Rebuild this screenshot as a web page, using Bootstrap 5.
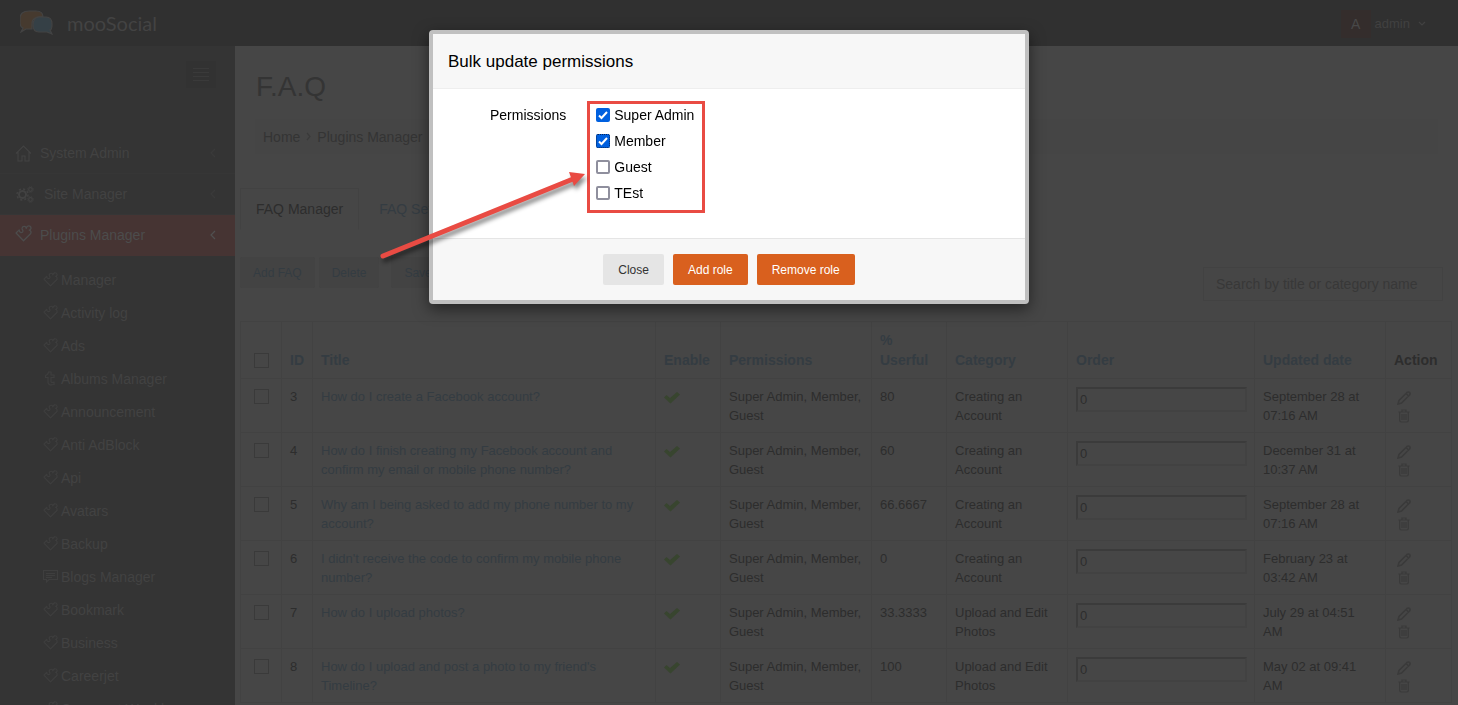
<!DOCTYPE html>
<html lang="en">
<head>
<meta charset="utf-8">
<meta name="viewport" content="width=device-width, initial-scale=1">
<title>F.A.Q - mooSocial</title>
<link href="https://cdn.jsdelivr.net/npm/bootstrap@5.3.0/dist/css/bootstrap.min.css" rel="stylesheet">
<style>
  body { font-family: "Liberation Sans", Arial, sans-serif; font-size: 14px; line-height: 20px; background: #464646; color: #2d2d2d; overflow: hidden; height: 100vh; }
  a { text-decoration: none; color: inherit; }
  svg { fill: none; stroke: currentColor; stroke-width: 1.2; flex: none; }

  .topbar { background: #303030; height: 46px; padding: 2px 32px 0 20px; color: #434343; }
  .brand-text { font-family: Lato, sans-serif; font-size: 20px; line-height: 24px; margin: 0 0 3px 14px; color: #434343; }
  .brand-logo { margin-bottom: 3px; }
  .avatar { width: 30px; height: 28px; background: #342d2c; color: #484848; line-height: 28px; text-align: center; }
  .user-btn { background: none; border: 0; padding: 0; color: #414141; font-size: 13px; }

  .sidebar { width: 235px; background: #343434; color: #424242; flex: none; }
  .toggler { width: 30px; height: 27px; background: #323232; border: 0; color: #3a3a3a; margin: 15px 19px 45px auto; padding: 0; }
  .main-link { height: 41px; padding: 0 19px 0 15px; border-bottom: 1px solid #363636; }
  .main-link .chev { color: #3a3a3a; }
  .main-link.current { background: #463433; color: #4c4c4c; border-color: #463433; }
  .main-link.current .chev { color: #505050; }
  .sub-menu { padding: 7px 0 0 43px; }
  .sub-link { height: 33px; gap: 3px; }
  .sub-link svg { color: #3e3e3e; }
  .cog-gap { gap: 10px; }

  .content { padding: 0 6px 0 5px; }
  h1 { font-size: 28px; line-height: 34px; margin: 24px 16px 15px; font-weight: 400; color: #343434; }
  .crumbs { background: #454545; margin: 0 14px 34px 15px; height: 35px; padding: 0 8px; color: #343434; gap: 6px; }
  .crumbs svg { color: #3a3a3a; }
  .tab-item { height: 42px; padding: 0 15px; border: 1px solid transparent; }
  .tab-item.current { border-color: #424242; border-bottom-color: transparent; }
  .toolbar { margin-top: 27px; }
  .tool-btn { background: #434343; border: 0; border-radius: 2px; height: 31px; padding: 0 13px; font-size: 12px; }
  .blueish { color: #343c42; }
  .search { width: 240px; height: 34px; background: transparent; border: 1px solid #424242; padding: 0 12px; margin: 10px 9px 20px 0; }
  .search::placeholder { color: #383838; opacity: 1; }

  .faq { table-layout: fixed; width: 100%; border-collapse: collapse; font-size: 13px; line-height: 19px; }
  .faq th, .faq td { border: 1px solid #424242; padding: 8px 7px 7px 8px; vertical-align: top; }
  .faq th { font-size: 14px; vertical-align: bottom; height: 57px; line-height: 20px; padding-bottom: 8px; }
  .faq a { color: #343c42; }
  .faq .pick { padding-left: 13px; }
  .faq .when { padding-right: 12px; }
  .pick input { appearance: none; width: 15px; height: 15px; border: 1px solid #3a3a3a; display: block; margin: 2px 0; }
  .order-box { width: 100%; height: 25px; border: 2px solid; border-color: #3b3b3b #424242 #424242 #3b3b3b; background: transparent; color: #2d2d2d; padding: 0 2px; display: block; }
  .faq .act a { display: block; height: 14px; margin: 4px 0 0 3px; color: #3a3a3a; }
  .act a svg { display: block; }
  .ok { color: #38452f; }

  .dlg { width: 600px; max-width: 600px; margin: 30px auto; }
  .dlg .modal-content { border: 4px solid #c0c0c0; border-radius: 4px; box-shadow: 0 5px 15px rgba(0,0,0,.5); color: #000; }
  .dlg .modal-header { background: #f7f7f7; padding: 16px 15px 14px; height: 55px; border-color: #eee; border-radius: 0; }
  .dlg .modal-title { font-size: 17px; line-height: 24px; font-weight: 400; }
  .dlg .modal-body { padding: 12px 15px 25px 57px; gap: 21px; }
  .perm-label { line-height: 28px; }
  .dlg .modal-footer { background: #f7f7f7; padding: 15px; gap: 9px; border-color: #e5e5e5; border-radius: 0; }
  .dlg .modal-footer > * { margin: 0; }
  .perm-box { border: 3px solid #e94b43; width: 118px; height: 112px; padding: 0 6px; gap: 4px; }
  .perm-box label { height: 22px; gap: 4px; white-space: nowrap; }
  .perm-box input { width: 14px; height: 14px; margin: 0; appearance: none; border: 2px solid #8f8f9d; border-radius: 2px; background: #fff; }
  .perm-box input:checked { border: 0; background: #0060df url("data:image/svg+xml,%3Csvg xmlns='http://www.w3.org/2000/svg' viewBox='0 0 14 14'%3E%3Cpath d='M3 7.5l2.5 2.5L11 4' fill='none' stroke='white' stroke-width='2'/%3E%3C/svg%3E"); }
  .perm-box input.focused { outline: 1px dotted #06275c; outline-offset: -1px; }
  .dlg-btn { border: 0; border-radius: 2px; height: 31px; padding: 0 15px; font-size: 12px; background: #e5e5e5; color: #333; }
  .dlg-btn.warm { background: #d9601e; color: #fff; }
  .arrow { position: absolute; left: -50px; top: 138px; overflow: visible; filter: drop-shadow(2px 4px 2px rgba(0,0,0,.45)); }
</style>
</head>
<body>
<svg width="0" height="0" class="position-absolute">
  <symbol id="plug" viewBox="0 0 16 16"><path stroke-linejoin="round" d="M1 7.500 4 4.600C4 7.400 6.200 7.600 7.200 6.400 8.200 5 6.200 4.200 6.600 3 7.200 1 10 .6 10.600 3.200 11 .6 13.200.4 14.200 1.200 16 2.800 14.600 4.600 13.400 4.800 15 5.200 15.400 6.600 14.800 8L8 14.800Z"/></symbol>
  <symbol id="chev" viewBox="0 0 6 10"><path d="M5 1 1 5l4 4"/></symbol>
  <symbol id="tick" viewBox="0 0 16 12"><path fill="currentColor" stroke="none" d="M0 5.500 2.500 3 6 6 13 0l3 2.500L6.500 11.500Z"/></symbol>
  <symbol id="pen" viewBox="0 0 14 14"><path stroke-width="1.600" d="M1 13 2 9.500 10 1.500Q11.500.5 12.700 1.600 13.500 3 12.500 4L4.500 12ZM9 2.500 11.500 5"/></symbol>
  <symbol id="bin" viewBox="0 0 12 14"><path d="M.5 3h11M4 2.500V1h4v1.500M1.700 3v8.500q0 1.500 1.500 1.500h5.600q1.500 0 1.500-1.500V3M4 5v6M6 5v6M8 5v6"/></symbol>
</svg>

<nav class="topbar d-flex align-items-center">
  <a href="#" class="d-flex align-items-center">
    <svg class="brand-logo" width="33" height="25" viewBox="0 0 33 25" stroke="none"><path fill="#463a2f" d="M9 1h7q7 0 7 6-11-1-11 7v5H6l-5 3 2-4Q0 17 0 12V9Q0 1 9 1Z"/><path fill="#354046" d="M19 7h7q6 0 6 7 0 6-2 6l2 4-5-2h-8q-6 0-6-7t6-8Z"/></svg>
    <span class="brand-text">mooSocial</span>
  </a>
  <div class="d-flex align-items-center ms-auto">
    <span class="avatar">A</span>
    <button class="user-btn d-flex align-items-center gap-2 ms-1" type="button">admin <svg width="8" height="6" viewBox="0 0 8 6"><path d="M1 1l3 3 3-3"/></svg></button>
  </div>
</nav>

<div class="d-flex align-items-stretch">
  <aside class="sidebar">
    <button class="toggler d-block" type="button" aria-label="Toggle menu"><svg class="d-block mx-auto" width="16" height="14" viewBox="0 0 16 14"><path stroke-width="1" d="M0 .5h16M0 4.500h16M0 8.500h16M0 12.500h16"/></svg></button>
    <a href="#" class="main-link d-flex align-items-center gap-2"><svg width="17" height="17" viewBox="0 0 17 17"><path d="M1 8.500 8.500 1 16 8.500M3 7v9h4v-5h3v5h4V7"/></svg><span>System Admin</span><svg class="chev ms-auto" width="6" height="10"><use href="#chev"/></svg></a>
    <a href="#" class="main-link cog-gap d-flex align-items-center"><svg width="19" height="17" viewBox="0 0 19 17"><circle cx="7.500" cy="8.500" r="3.500" stroke-width="2"/><circle cx="7.500" cy="8.500" r="5.500" stroke-width="1.500" stroke-dasharray="2.200 2.100"/><circle cx="15.500" cy="3.500" r="1.800"/><circle cx="15.500" cy="3.500" r="2.800" stroke-width="1" stroke-dasharray="1.200 1"/><circle cx="15.500" cy="13.500" r="1.800"/><circle cx="15.500" cy="13.500" r="2.800" stroke-width="1" stroke-dasharray="1.200 1"/></svg><span>Site Manager</span><svg class="chev ms-auto" width="6" height="10"><use href="#chev"/></svg></a>
    <a href="#" class="main-link current d-flex align-items-center gap-2"><svg width="17" height="17" class="mb-1"><use href="#plug"/></svg><span>Plugins Manager</span><svg class="chev ms-auto" width="6" height="10"><use href="#chev"/></svg></a>
    <div class="sub-menu">
      <a href="#" class="sub-link d-flex align-items-center"><svg width="15" height="15"><use href="#plug"/></svg>Manager</a>
      <a href="#" class="sub-link d-flex align-items-center"><svg width="15" height="15"><use href="#plug"/></svg>Activity log</a>
      <a href="#" class="sub-link d-flex align-items-center"><svg width="15" height="15"><use href="#plug"/></svg>Ads</a>
      <a href="#" class="sub-link d-flex align-items-center"><svg width="15" height="15" viewBox="0 0 15 15"><path d="M5.500 1h2.500v3h3v2.500H8v4q0 1.500 3 .7v2.300q-6 1.500-6-2.500V6.500H2.500V4.500Q5 4 5.500 1Z"/></svg>Albums Manager</a>
      <a href="#" class="sub-link d-flex align-items-center"><svg width="15" height="15"><use href="#plug"/></svg>Announcement</a>
      <a href="#" class="sub-link d-flex align-items-center"><svg width="15" height="15"><use href="#plug"/></svg>Anti AdBlock</a>
      <a href="#" class="sub-link d-flex align-items-center"><svg width="15" height="15"><use href="#plug"/></svg>Api</a>
      <a href="#" class="sub-link d-flex align-items-center"><svg width="15" height="15"><use href="#plug"/></svg>Avatars</a>
      <a href="#" class="sub-link d-flex align-items-center"><svg width="15" height="15"><use href="#plug"/></svg>Backup</a>
      <a href="#" class="sub-link d-flex align-items-center"><svg width="15" height="15" viewBox="0 0 15 15"><path d="M.5 1.500h14v9H6l-2.500 2.500v-2.500h-3ZM3 4.500h9M3 6.500h9M3 8.500h6"/></svg>Blogs Manager</a>
      <a href="#" class="sub-link d-flex align-items-center"><svg width="15" height="15"><use href="#plug"/></svg>Bookmark</a>
      <a href="#" class="sub-link d-flex align-items-center"><svg width="15" height="15"><use href="#plug"/></svg>Business</a>
      <a href="#" class="sub-link d-flex align-items-center"><svg width="15" height="15"><use href="#plug"/></svg>Careerjet</a>
      <a href="#" class="sub-link d-flex align-items-center"><svg width="15" height="15"><use href="#plug"/></svg>Comment Weekly</a>
    </div>
  </aside>

  <main class="content flex-grow-1">
    <h1>F.A.Q</h1>
    <div class="crumbs d-flex align-items-center"><a href="#">Home</a><svg width="5" height="9" viewBox="0 0 5 9"><path d="M1 1l3 3.500L1 8"/></svg><a href="#">Plugins Manager</a></div>
    <div class="d-flex">
      <a href="#" class="tab-item current d-flex align-items-center">FAQ Manager</a>
      <a href="#" class="tab-item blueish d-flex align-items-center ms-1">FAQ Settings</a>
    </div>
    <div class="toolbar d-flex justify-content-between align-items-start">
      <div class="d-flex gap-1">
        <button class="tool-btn blueish" type="button">Add FAQ</button>
        <button class="tool-btn blueish" type="button">Delete</button>
        <button class="tool-btn blueish ms-2" type="button">Save order</button>
      </div>
      <input class="search" type="text" aria-label="Search" placeholder="Search by title or category name">
    </div>
    <table class="faq">
      <colgroup><col style="width:41px"><col style="width:31px"><col><col style="width:65px"><col style="width:151px"><col style="width:75px"><col style="width:121px"><col style="width:187px"><col style="width:131px"><col style="width:66px"></colgroup>
      <thead><tr><th class="pick"><input type="checkbox" aria-label="Select all"></th><th><a href="#">ID</a></th><th><a href="#">Title</a></th><th><a href="#">Enable</a></th><th><a href="#">Permissions</a></th><th><a href="#">% Userful</a></th><th><a href="#">Category</a></th><th><a href="#">Order</a></th><th><a href="#">Updated date</a></th><th>Action</th></tr></thead>
      <tbody>
        <tr><td class="pick"><input type="checkbox" aria-label="Select 3"></td><td>3</td><td><a href="#">How do I create a Facebook account?</a></td><td><svg class="ok" width="16" height="12"><use href="#tick"/></svg></td><td>Super Admin, Member, Guest</td><td>80</td><td>Creating an Account</td><td><input class="order-box" type="text" value="0" aria-label="Order"></td><td class="when">September 28 at 07:16 AM</td><td class="act"><a href="#" aria-label="Edit"><svg width="14" height="14"><use href="#pen"/></svg></a><a href="#" aria-label="Delete"><svg width="14" height="14"><use href="#bin"/></svg></a></td></tr>
        <tr><td class="pick"><input type="checkbox" aria-label="Select 4"></td><td>4</td><td><a href="#">How do I finish creating my Facebook account and confirm my email or mobile phone number?</a></td><td><svg class="ok" width="16" height="12"><use href="#tick"/></svg></td><td>Super Admin, Member, Guest</td><td>60</td><td>Creating an Account</td><td><input class="order-box" type="text" value="0" aria-label="Order"></td><td class="when">December 31 at 10:37 AM</td><td class="act"><a href="#" aria-label="Edit"><svg width="14" height="14"><use href="#pen"/></svg></a><a href="#" aria-label="Delete"><svg width="14" height="14"><use href="#bin"/></svg></a></td></tr>
        <tr><td class="pick"><input type="checkbox" aria-label="Select 5"></td><td>5</td><td><a href="#">Why am I being asked to add my phone number to my account?</a></td><td><svg class="ok" width="16" height="12"><use href="#tick"/></svg></td><td>Super Admin, Member, Guest</td><td>66.6667</td><td>Creating an Account</td><td><input class="order-box" type="text" value="0" aria-label="Order"></td><td class="when">September 28 at 07:16 AM</td><td class="act"><a href="#" aria-label="Edit"><svg width="14" height="14"><use href="#pen"/></svg></a><a href="#" aria-label="Delete"><svg width="14" height="14"><use href="#bin"/></svg></a></td></tr>
        <tr><td class="pick"><input type="checkbox" aria-label="Select 6"></td><td>6</td><td><a href="#">I didn't receive the code to confirm my mobile phone number?</a></td><td><svg class="ok" width="16" height="12"><use href="#tick"/></svg></td><td>Super Admin, Member, Guest</td><td>0</td><td>Creating an Account</td><td><input class="order-box" type="text" value="0" aria-label="Order"></td><td class="when">February 23 at 03:42 AM</td><td class="act"><a href="#" aria-label="Edit"><svg width="14" height="14"><use href="#pen"/></svg></a><a href="#" aria-label="Delete"><svg width="14" height="14"><use href="#bin"/></svg></a></td></tr>
        <tr><td class="pick"><input type="checkbox" aria-label="Select 7"></td><td>7</td><td><a href="#">How do I upload photos?</a></td><td><svg class="ok" width="16" height="12"><use href="#tick"/></svg></td><td>Super Admin, Member, Guest</td><td>33.3333</td><td>Upload and Edit Photos</td><td><input class="order-box" type="text" value="0" aria-label="Order"></td><td class="when">July 29 at 04:51 AM</td><td class="act"><a href="#" aria-label="Edit"><svg width="14" height="14"><use href="#pen"/></svg></a><a href="#" aria-label="Delete"><svg width="14" height="14"><use href="#bin"/></svg></a></td></tr>
        <tr><td class="pick"><input type="checkbox" aria-label="Select 8"></td><td>8</td><td><a href="#">How do I upload and post a photo to my friend's Timeline?</a></td><td><svg class="ok" width="16" height="12"><use href="#tick"/></svg></td><td>Super Admin, Member, Guest</td><td>100</td><td>Upload and Edit Photos</td><td><input class="order-box" type="text" value="0" aria-label="Order"></td><td class="when">May 02 at 09:41 AM</td><td class="act"><a href="#" aria-label="Edit"><svg width="14" height="14"><use href="#pen"/></svg></a><a href="#" aria-label="Delete"><svg width="14" height="14"><use href="#bin"/></svg></a></td></tr>
      </tbody>
    </table>
  </main>
</div>

<div class="modal d-block" role="dialog" aria-labelledby="dlgTitle">
  <div class="modal-dialog dlg">
    <div class="modal-content">
      <div class="modal-header"><h4 class="modal-title" id="dlgTitle">Bulk update permissions</h4></div>
      <div class="modal-body d-flex align-items-start">
        <span id="permLabel" class="perm-label">Permissions</span>
        <div class="perm-box d-flex flex-column" role="group" aria-labelledby="permLabel">
          <label class="d-flex align-items-center"><input type="checkbox" checked>Super Admin</label>
          <label class="d-flex align-items-center"><input type="checkbox" class="focused" checked>Member</label>
          <label class="d-flex align-items-center"><input type="checkbox">Guest</label>
          <label class="d-flex align-items-center"><input type="checkbox">TEst</label>
        </div>
      </div>
      <div class="modal-footer justify-content-center">
        <button class="dlg-btn" type="button">Close</button>
        <button class="dlg-btn warm" type="button">Add role</button>
        <button class="dlg-btn warm" type="button">Remove role</button>
      </div>
      <svg class="arrow" width="202" height="86" viewBox="0 0 202 86"><path d="M0 84 190 7" stroke="#e94b43" stroke-width="5" stroke-linecap="round"/><path d="M186 0l16 2-11 12Z" fill="#e94b43" stroke="none"/></svg>
    </div>
  </div>
</div>
<script src="https://cdn.jsdelivr.net/npm/bootstrap@5.3.0/dist/js/bootstrap.bundle.min.js"></script>
</body>
</html>
